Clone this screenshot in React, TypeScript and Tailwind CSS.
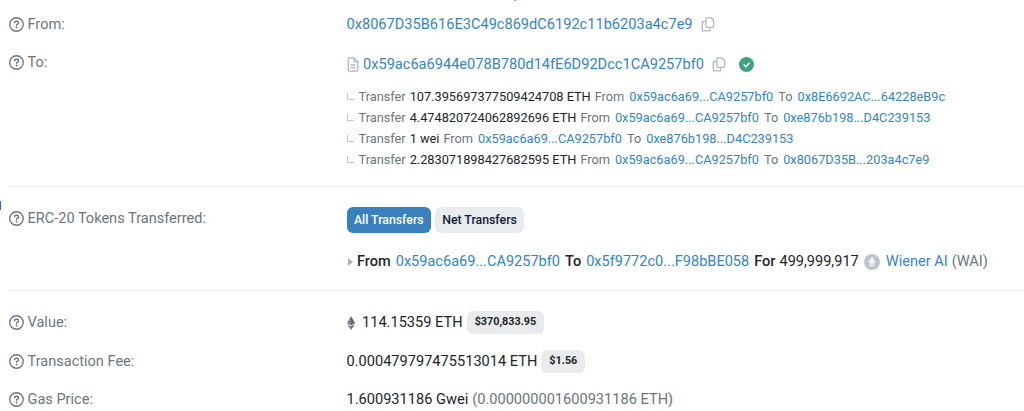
import type { ReactNode } from 'react';

type InternalTransfer = {
  amount: string;
  from: string;
  to: string;
};

const transfers: InternalTransfer[] = [
  { amount: '107.395697377509424708 ETH', from: '0x59ac6a69...CA9257bf0', to: '0x8E6692AC...64228eB9c' },
  { amount: '4.474820724062892696 ETH', from: '0x59ac6a69...CA9257bf0', to: '0xe876b198...D4C239153' },
  { amount: '1 wei', from: '0x59ac6a69...CA9257bf0', to: '0xe876b198...D4C239153' },
  { amount: '2.283071898427682595 ETH', from: '0x59ac6a69...CA9257bf0', to: '0x8067D35B...203a4c7e9' },
];

function HelpIcon() {
  return (
    <svg viewBox="0 0 16 16" className="mb-[2px] h-[15px] w-[15px] shrink-0" fill="none" stroke="currentColor">
      <circle cx="8" cy="8" r="7.2" strokeWidth="1.4" />
      <path d="M5.900 6.200C5.900 5.200 6.700 4.600 7.600 4.600h.8c1 0 1.800.7 1.800 1.600 0 1.300-2.100 1.300-2.100 2.600" strokeWidth="1.5" strokeLinecap="round" />
      <circle cx="8.100" cy="11.200" r="1" fill="currentColor" stroke="none" />
    </svg>
  );
}

function CopyIcon() {
  return (
    <svg viewBox="0 0 14 16" className="h-[15px] w-[14px] shrink-0 text-[#b0b7c1]" fill="none" stroke="currentColor" strokeWidth="1.4" strokeLinejoin="round">
      <path d="M6.100 1h4.300L13 3.600v6.200c0 .8-.5 1.300-1.300 1.300H6.100c-.8 0-1.300-.5-1.300-1.300V2.300C4.800 1.500 5.300 1 6.100 1z" />
      <path d="M3.300 4.800H2.200C1.400 4.800.9 5.300.9 6.100v7.400c0 .8.5 1.300 1.300 1.300h5.300c.8 0 1.300-.5 1.300-1.300v-.8" strokeLinecap="round" />
    </svg>
  );
}

function ContractIcon() {
  return (
    <svg viewBox="0 0 12 16" className="h-[15px] w-[12px] shrink-0 text-[#adb5bd]" fill="none" stroke="currentColor" strokeWidth="1.4" strokeLinejoin="round">
      <path d="M2.200.9h5L11.200 4.900v8.800c0 .8-.5 1.300-1.300 1.300H2.200c-.8 0-1.300-.5-1.300-1.300V2.200C.9 1.400 1.400.9 2.200.9z" />
      <path d="M7.200 1v3.900h3.900M3.400 8.500h5.300M3.400 11.400h5.300" />
    </svg>
  );
}

function VerifiedIcon() {
  return (
    <svg viewBox="0 0 16 16" className="h-[15px] w-[15px] shrink-0">
      <circle cx="8" cy="8" r="8" fill="#3fa283" />
      <path d="M5 8.100l2.200 2.200 4-4.100" fill="none" stroke="#fff" strokeWidth="1.6" />
    </svg>
  );
}

function EtherIcon() {
  return (
    <svg viewBox="0 0 8 14" className="h-[14px] w-[8px] shrink-0">
      <path d="M4 0L0 7.100 4 9.400z" fill="#7d858d" />
      <path d="M4 0l4 7.100L4 9.400z" fill="#626a72" />
      <path d="M0 8l4 2.300V14z" fill="#7d858d" />
      <path d="M8 8l-4 2.300V14z" fill="#626a72" />
    </svg>
  );
}

function TokenIcon() {
  return (
    <svg viewBox="0 0 16 16" className="h-4 w-4 shrink-0">
      <circle cx="8" cy="8" r="8" fill="#bfc5d0" />
      <path d="M8 2.500l3.400 5.700L8 10.200 4.600 8.200z" fill="#f5f6f8" />
      <path d="M4.600 9L8 11l3.400-2L8 13.600z" fill="#f5f6f8" />
    </svg>
  );
}

function Label({ children }: { children: ReactNode }) {
  return (
    <div className="flex h-5 w-[337.500px] shrink-0 items-center gap-[3.500px] text-[14.55px] text-[#6c757d]">
      <HelpIcon />
      <span>{children}</span>
    </div>
  );
}

function Address({ children }: { children: ReactNode }) {
  return <a className="text-[#3584c5]">{children}</a>;
}

function Badge({ children }: { children: ReactNode }) {
  return (
    <span className="mb-px flex h-[23px] items-center rounded-md bg-[#e9ebed] px-2 text-[10.8px] font-bold text-[#212529]">
      {children}
    </span>
  );
}

export default function App() {
  return (
    <div
      className="relative h-[411px] w-[1024px] overflow-hidden bg-white pl-[9px] text-[14.6px] whitespace-nowrap text-[#212529]"
      style={{ fontFamily: 'Roboto, "Liberation Sans", sans-serif' }}
    >
      <div className="absolute top-0 left-[514px] h-px w-[2px] bg-[#8296f5]" />
      <div className="absolute top-[201px] left-0 h-[9px] w-px bg-[#2f62ea]" />

      {/* Addresses */}
      <section className="h-[186px] pt-[15px]">
        <div className="flex">
          <Label>From:</Label>
          <div className="flex h-5 items-center gap-2">
            <Address>0x8067D35B616E3C49c869dC6192c11b6203a4c7e9</Address>
            <span className="mb-[2px]"><CopyIcon /></span>
          </div>
        </div>
        <div className="flex pt-[18px]">
          <Label>To:</Label>
          <div className="pt-[2px]">
            <div className="flex h-5 items-center">
              <span className="mb-px"><ContractIcon /></span>
              <span className="ml-[4.500px]">
                <Address>0x59ac6a6944e078B780d14fE6D92Dcc1CA9257bf0</Address>
              </span>
              <span className="mb-[2px] ml-2"><CopyIcon /></span>
              <span className="mb-px ml-[13.500px]"><VerifiedIcon /></span>
            </div>
            <div className="pt-[10.500px] text-[12.75px] leading-[21.1px]">
              {transfers.map((t) => (
                <div key={t.amount} className="flex h-[21.1px] items-center">
                  <span className="mr-[5px] h-[7px] w-[7px] border-b border-l border-[#bcc6d1]" />
                  <span className="text-[#6c757d]">Transfer</span>
                  <span className="ml-1">{t.amount}</span>
                  <span className="mr-[5px] ml-1 text-[#6c757d]">From</span>
                  <Address>{t.from}</Address>
                  <span className="mx-[5px] text-[#6c757d]">To</span>
                  <Address>{t.to}</Address>
                </div>
              ))}
            </div>
          </div>
        </div>
      </section>

      {/* Token transfers */}
      <section className="flex h-[104px] border-t border-[#f0f1f3] pt-[20px]">
        <div className="pt-[2px]">
          <Label>ERC-20 Tokens Transferred:</Label>
        </div>
        <div>
          <div className="flex gap-1 text-[12.3px] font-medium">
            <button className="h-[26px] w-[84.500px] rounded-md bg-[#3980bd] pt-px text-white">All Transfers</button>
            <button className="h-[26px] w-[89px] rounded-md bg-[#e9ecef] pt-px text-[#111b36]">Net Transfers</button>
          </div>
          <div className="mt-[19px] flex h-5 items-center text-[14.55px]">
            <svg viewBox="0 0 5 8" className="mr-[4px] ml-[1.500px] h-2 w-[5px]">
              <path d="M0 0l5 4-5 4z" fill="#adb5bd" />
            </svg>
            <span className="mr-[5px] font-medium">From</span>
            <Address>0x59ac6a69...CA9257bf0</Address>
            <span className="mx-[5px] font-medium">To</span>
            <Address>0x5f9772c0...F98bBE058</Address>
            <span className="mr-1 ml-[5px] font-medium">For</span>
            <span className="mr-[5px]">499,999,917</span>
            <TokenIcon />
            <span className="mr-1 ml-[6px]"><Address>Wiener AI</Address></span>
            <span className="text-[#6c757d]">(WAI)</span>
          </div>
        </div>
      </section>

      {/* Value and fees */}
      <section className="border-t border-[#f0f1f3] pt-[22px]">
        <div className="flex h-5 items-center">
          <Label>Value:</Label>
          <div className="flex items-center">
            <span className="mr-[7px] ml-[0.500px]"><EtherIcon /></span>
            <span className="mr-1">114.15359 ETH</span>
            <Badge>$370,833.95</Badge>
          </div>
        </div>
        <div className="mt-[19px] flex h-5 items-center">
          <Label>Transaction Fee:</Label>
          <div className="flex items-center gap-1">
            <span>0.000479797475513014 ETH</span>
            <Badge>$1.56</Badge>
          </div>
        </div>
        <div className="mt-[18px] flex h-5 items-center">
          <Label>Gas Price:</Label>
          <div className="flex items-center gap-1">
            <span>1.600931186 Gwei</span>
            <span className="text-[#6c757d]">(0.000000001600931186 ETH)</span>
          </div>
        </div>
      </section>
    </div>
  );
}
